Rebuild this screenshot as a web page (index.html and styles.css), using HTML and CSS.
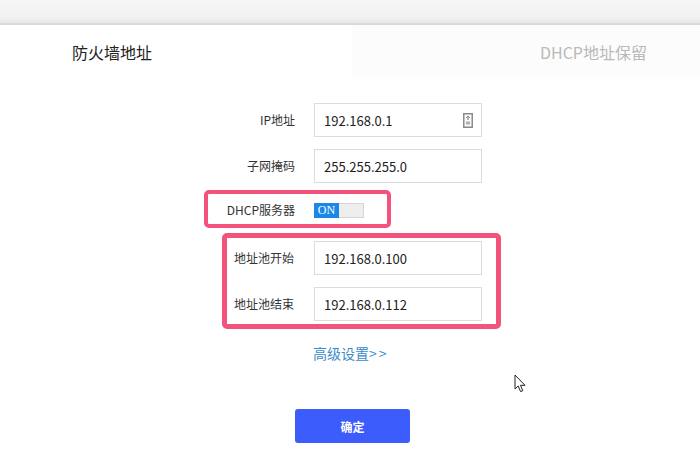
FILE: index.html
```html
<!DOCTYPE html>
<html lang="zh-CN">
<head>
<meta charset="utf-8">
<title>防火墙地址</title>
<link rel="stylesheet" href="styles.css">
</head>
<body>
<div class="topbar"></div>
<div class="tabs">
  <div class="tab tab-active">防火墙地址</div>
  <div class="tab tab-idle">DHCP地址保留</div>
</div>
<div class="form">
  <div class="row row-plain">
    <label class="label">IP地址</label>
    <div class="input"><span>192.168.0.1</span>
      <svg class="ip-icon" width="10" height="15" viewBox="0 0 10 15">
        <rect x="0.75" y="0.75" width="8.5" height="13.5" fill="#fafafa" stroke="#8a8a8a" stroke-width="1.5"/>
        <path d="M5 3 L5 7" stroke="#8a8a8a" stroke-width="1.2"/>
        <path d="M3.2 5 L5 3 L6.8 5" fill="none" stroke="#8a8a8a" stroke-width="1"/>
        <rect x="3" y="8.5" width="4" height="3" fill="#b0b0b0"/>
      </svg>
    </div>
  </div>
  <div class="row row-plain">
    <label class="label">子网掩码</label>
    <div class="input"><span>255.255.255.0</span></div>
  </div>
  <div class="mark mark-dhcp">
    <label class="label label-dhcp">DHCP服务器</label>
    <div class="toggle"><span class="toggle-on">ON</span><span class="toggle-off"></span></div>
  </div>
  <div class="mark mark-pool">
    <div class="row">
      <label class="label label-pool">地址池开始</label>
      <div class="input"><span>192.168.0.100</span></div>
    </div>
    <div class="row">
      <label class="label label-pool">地址池结束</label>
      <div class="input"><span>192.168.0.112</span></div>
    </div>
  </div>
  <div class="more"><a class="more-link">高级设置<span class="gt">&gt;&gt;</span></a></div>
  <div class="actions"><button class="btn">确定</button></div>
</div>
<svg class="cursor" width="13" height="20" viewBox="0 0 13 20">
  <path d="M1 1 L1 15 L4.2 12 L6.6 17.6 L8.8 16.7 L6.5 11.3 L11 11.3 Z" fill="#fff" stroke="#222" stroke-width="1" stroke-linejoin="round"/>
</svg>
</body>
</html>
```
FILE: styles.css
```css
html, body {
  margin: 0;
  padding: 0;
  background: #fff;
  font-family: "Noto Sans CJK SC", "Noto Sans", sans-serif;
  color: #333;
}
body {
  position: relative;
  width: 700px;
  height: 454px;
  overflow: hidden;
}
.topbar {
  height: 23px;
  background: linear-gradient(#f6f6f6, #f2f2f2 70%, #e8e8e8);
  border-bottom: 2px solid #d9d9d9;
}
.tabs {
  display: flex;
  height: 54px;
}
.tab {
  display: flex;
  align-items: center;
  font-size: 16px;
  line-height: 20px;
}
.tab-active {
  width: 280px;
  padding-left: 72px;
  color: #222;
  background: #fff;
}
.tab-idle {
  flex: 1;
  justify-content: flex-end;
  padding-right: 53px;
  color: #b9b9b9;
  background: #fcfcfc;
}
.form {
  padding-top: 24px;
}
.row {
  display: flex;
  align-items: center;
  gap: 19px;
}
.row-plain {
  margin-left: 200px;
  margin-bottom: 12px;
}
.label {
  font-size: 12px;
  line-height: 16px;
  color: #333;
  text-align: right;
}
.row-plain .label {
  width: 95px;
}
.input {
  box-sizing: border-box;
  width: 168px;
  height: 34px;
  border: 1px solid #dcdcdc;
  background: #fff;
  display: flex;
  align-items: center;
  justify-content: space-between;
  padding: 0 8px 0 9px;
  font-size: 13px;
  color: #222;
}
.ip-icon {
  display: block;
}
.mark {
  border: 4px solid #f2527c;
  border-radius: 5px;
  box-sizing: border-box;
}
.mark-dhcp {
  margin-top: -5px;
  margin-left: 204px;
  width: 187px;
  height: 38px;
  display: flex;
  align-items: center;
  gap: 19px;
  padding-top: 2px;
}
.label-dhcp {
  width: 87px;
  font-size: 12px;
}
.toggle {
  display: flex;
  width: 50px;
  height: 15px;
}
.toggle-on {
  width: 25px;
  background: #1b87e6;
  color: #fff;
  font-family: "Liberation Serif", serif;
  font-size: 12px;
  line-height: 15px;
  text-align: center;
}
.toggle-off {
  flex: 1;
  box-sizing: border-box;
  background: #eeeeee;
  border: 1px solid #d6d6d6;
  border-left: none;
}
.mark-pool {
  margin-top: 5px;
  margin-left: 222px;
  width: 279px;
  border-width: 5px;
  padding: 3px 14px 3px 7px;
  display: flex;
  flex-direction: column;
  gap: 12px;
}
.label-pool {
  width: 61px;
  text-align: left;
}
.more {
  margin-top: 11px;
  padding-left: 313px;
  height: 20px;
}
.more-link {
  font-size: 14px;
  line-height: 20px;
  color: #3b8bc9;
}
.gt {
  letter-spacing: 2px;
}
.actions {
  margin-top: 49px;
  padding-left: 295px;
}
.btn {
  width: 115px;
  height: 34px;
  border: none;
  border-radius: 3px;
  background: #3d5cfc;
  color: #fff;
  font-family: "Noto Sans CJK SC", sans-serif;
  font-size: 12px;
  font-weight: bold;
  padding: 0;
}
.cursor {
  position: absolute;
  left: 514px;
  top: 374px;
}
```
